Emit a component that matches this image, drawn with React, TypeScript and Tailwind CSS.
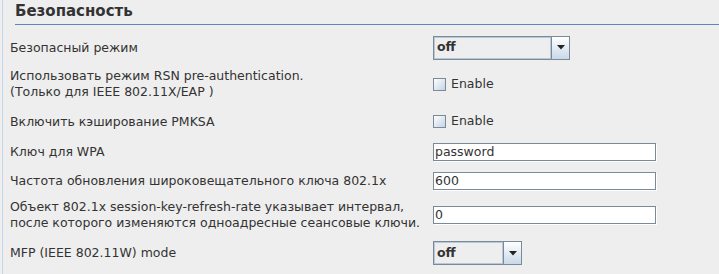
import React from "react";

const font = { fontFamily: '"DejaVu Sans", Verdana, sans-serif' };

function Combo({ value, width }: { value: string; width: string }) {
  return (
    <div className={`flex h-[24px] ${width} border border-[#7a8a99] bg-[#eeeeee]`}>
      <div className="flex flex-1 items-center border border-[#b8c8da] pl-[2px] text-[12.5px] font-bold text-[#333333]">
        {value}
      </div>
      <div className="flex w-[18px] items-center justify-center border-l border-[#7a8a99] bg-gradient-to-b from-white to-[#c9d8e8]">
        <svg width="8" height="5" viewBox="0 0 8 5">
          <path d="M0 0h8L4 4.5z" fill="#222" />
        </svg>
      </div>
    </div>
  );
}

function Check() {
  return (
    <div className="flex items-center gap-[5px] text-[12.5px] text-[#333333]">
      <div className="h-[13px] w-[13px] border border-[#7a8a99] bg-gradient-to-br from-white to-[#c3d3e5]" />
      <span>Enable</span>
    </div>
  );
}

function Field({ value }: { value: string }) {
  return (
    <div className="flex h-[18px] w-[223px] items-center border border-[#7a8a99] bg-white pl-[1px] text-[12.5px] text-[#333333] shadow-[1px_1px_0_#ffffff]">
      {value}
    </div>
  );
}

function Row({ label, children, h, mt }: { label: React.ReactNode; children: React.ReactNode; h: string; mt: string }) {
  return (
    <div className={`flex items-center ${h} ${mt}`}>
      <div className="w-[430px] whitespace-nowrap pl-[7px] text-[12.5px] leading-[16px] text-[#333333]">{label}</div>
      <div>{children}</div>
    </div>
  );
}

export default function App() {
  return (
    <div className="h-[274px] w-[719px] overflow-hidden bg-[#eeeeee] pl-[2px]" style={font}>
      <div className="h-full border-l border-[#c3d6ea]">
        <div className="ml-[12px] flex h-[25px] items-end border-b border-[#6383c0] pb-[2px] text-[15px] font-bold text-[#333333]">
          Безопасность
        </div>
        <Row label="Безопасный режим" h="h-[25px]" mt="mt-[10px]">
          <Combo value="off" width="w-[137px]" />
        </Row>
        <Row
          label={
            <>
              Использовать режим RSN pre-authentication.
              <br />
              (Только для IEEE 802.11X/EAP )
            </>
          }
          h="h-[32px]"
          mt="mt-[8px]"
        >
          <Check />
        </Row>
        <Row label="Включить кэширование PMKSA" h="h-[23px]" mt="mt-[10px]">
          <Check />
        </Row>
        <Row label="Ключ для WPA" h="h-[18px]" mt="mt-[10px]">
          <Field value="password" />
        </Row>
        <Row label="Частота обновления широковещательного ключа 802.1x" h="h-[18px]" mt="mt-[11px]">
          <Field value="600" />
        </Row>
        <Row
          label={
            <>
              Объект 802.1x session-key-refresh-rate указывает интервал,
              <br />
              после которого изменяются одноадресные сеансовые ключи.
            </>
          }
          h="h-[32px]"
          mt="mt-[9px]"
        >
          <Field value="0" />
        </Row>
        <Row label="MFP (IEEE 802.11W) mode" h="h-[24px]" mt="mt-[10px]">
          <Combo value="off" width="w-[89px]" />
        </Row>
      </div>
    </div>
  );
}
